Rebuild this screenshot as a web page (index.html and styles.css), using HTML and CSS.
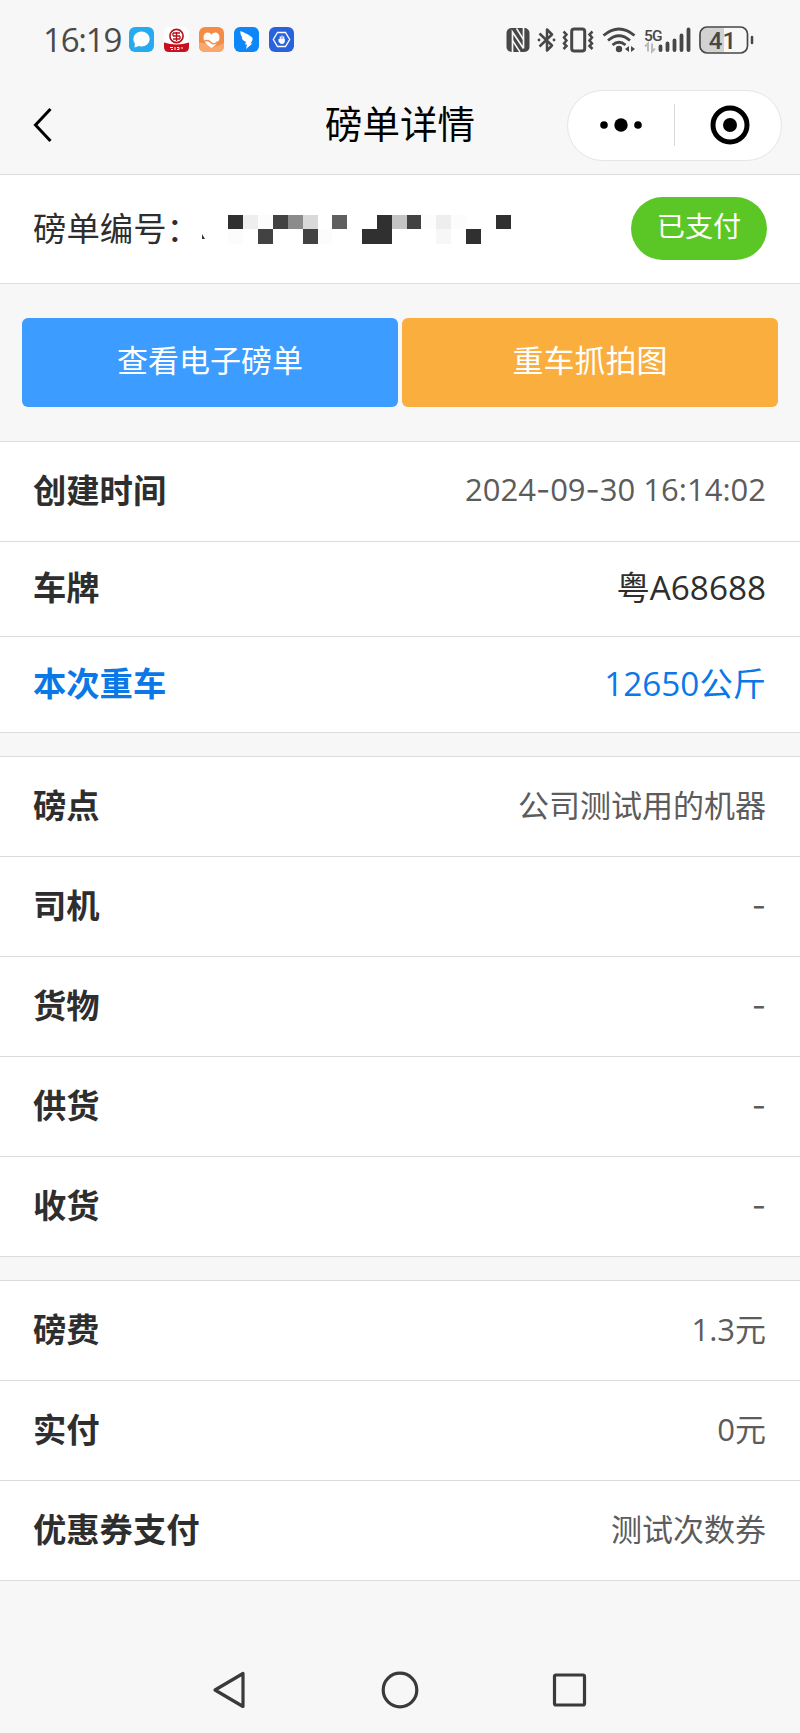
FILE: index.html
```
<!DOCTYPE html>
<html lang="zh-CN">
<head>
    <meta charset="UTF-8">
    <meta name="viewport" content="width=device-width, initial-scale=1.0">
    <title>磅单详情</title>
    <link rel="stylesheet" href="styles.css">
</head>
<body>
    <header class="header">
        <div class="statusbar">
            <span class="time">16:19</span>
            <div class="apps">
                <svg width="25" height="25" viewBox="0 0 25 25">
                    <rect width="25" height="25" rx="6" fill="#27aaf0"/>
                    <ellipse cx="12.5" cy="12" rx="8.2" ry="7.4" fill="#fff"/>
                    <path d="M6 15l-.5 5.5 6-2z" fill="#fff"/>
                </svg>
                <svg width="25" height="25" viewBox="0 0 25 25">
                    <rect width="25" height="25" rx="6" fill="#fff"/>
                    <path d="M0 15.5q12.5 4 25 0V20q0 5-5 5H5q-5 0-5-5z" fill="#c8101e"/>
                    <circle cx="12.5" cy="9" r="6.6" fill="#fff" stroke="#b5121b" stroke-width="1.6"/>
                    <path d="M9 6h7M9 9h7M9 12h7M12.5 5v9M9 6v3M16 9v3" fill="none" stroke="#b5121b" stroke-width="1.3"/>
                    <path d="M6 20.500h3M7 22.500h2M11 20v3M13 20.500h2v2h-2M18 20v2" stroke="#fff" stroke-width="1" fill="none"/>
                </svg>
                <svg width="25" height="25" viewBox="0 0 25 25">
                    <rect width="25" height="25" rx="6" fill="#f58b45"/>
                    <path d="M0 15q4 2 7 1t6 2 12-2v3q0 6-6 6H6q-6 0-6-6z" fill="#f9a76c"/>
                    <path d="M12.5 21C7 17 4.5 14 4.5 10.2 4.5 5 10.5 4 12.500 8c2-4 8-3 8 2.200C20.500 14 18 17 12.500 21z" fill="#fff"/>
                    <path d="M5 14.500c3-2 5-1 7 1s4 2 7-1" fill="none" stroke="#f58b45" stroke-width="1.5"/>
                </svg>
                <svg width="25" height="25" viewBox="0 0 25 25">
                    <rect width="25" height="25" rx="6" fill="#0d86f7"/>
                    <path d="M6.500 4C11 6 17 8.500 18.500 11c.8 1.700-1 4-2 5.500h2L12 22l1-4.500h-2l1-2.500C8.500 13.500 7.500 11.500 8 10 6.500 8 6.200 6 6.500 4z" fill="#fff"/>
                </svg>
                <svg width="25" height="25" viewBox="0 0 25 25">
                    <rect width="25" height="25" rx="6" fill="#2a62dc"/>
                    <path d="M8.500 5.500h8l4.200 7-4.200 7h-8l-4.200-7z" fill="none" stroke="#fff" stroke-width="1.3"/>
                    <path d="M11.300 13V9.500M13 13V8.500M14.700 13V9.500" fill="none" stroke="#fff" stroke-width="1.2"/>
                    <path d="M9.500 12h6.300v3q-.8 2-2.800 2t-3.500-2.500z" fill="#fff"/>
                </svg>
            </div>
            <div class="signals">
                <!-- nfc -->
                <svg class="nfc" width="24" height="30" viewBox="0 0 24 30">
                    <rect x=".5" y="3" width="23" height="24" rx="5" fill="#474747"/>
                    <path d="M6.500 27V7l11 16.500M17.500 3v20.500" fill="none" stroke="#f7f7f7" stroke-width="1.700"/>
                    <path d="M10.500 3.500l7 11M6.500 15.500l7.500 11.500" fill="none" stroke="#f7f7f7" stroke-width="1.500"/>
                </svg>
                <!-- bluetooth -->
                <svg class="bluetooth" width="19" height="30" viewBox="0 0 19 30">
                    <path d="M2.500 8.500L15 20.500 10 25.500V4.500l5 5L2.500 21.500" fill="none" stroke="#474747" stroke-width="2.500" stroke-linejoin="round"/>
                    <circle cx="2" cy="15" r="1.400" fill="#474747"/>
                    <circle cx="17" cy="15" r="1.400" fill="#474747"/>
                </svg>
                <!-- vibrate -->
                <svg class="vibrate" width="32" height="30" viewBox="0 0 32 30">
                    <rect x="9.700" y="4" width="13" height="22" rx="2.500" fill="none" stroke="#474747" stroke-width="3"/>
                    <path d="M1.500 6.500l3 3-2.500 3 2.500 3-2.500 3 2.500 2.500-3 3M30.500 6.500l-3 3 2.500 3-2.500 3 2.500 3-2.500 2.500 3 3" fill="none" stroke="#474747" stroke-width="2.500"/>
                </svg>
                <!-- wifi -->
                <svg class="wifi" width="34" height="30" viewBox="0 0 34 30">
                    <path d="M1.500 10.500q15.500-13 31 0M6 15.500q11-9.500 22 0M10.500 20q6.500-5.500 13 0" fill="none" stroke="#474747" stroke-width="2.800"/>
                    <circle cx="17" cy="24" r="3.200" fill="#474747"/>
                    <path d="M27 21v6l-4-3zM29 21v6l4-3z" fill="#474747"/>
                </svg>
                <!-- mobile network -->
                <svg class="mobile" width="48" height="30" viewBox="0 0 48 30">
                    <text x="0" y="15.500" class="net">5G</text>
                    <path d="M4 26.500v-8l-3 3M8 18.500v8l3-3" fill="none" stroke="#bbb" stroke-width="2"/>
                    <path d="M16.500 21.500V25M23.500 18.500V25M30.500 15.500V25M37.500 10.500V25M44.500 4.500V25" stroke="#474747" stroke-width="3.800" stroke-linecap="round"/>
                </svg>
                <!-- battery -->
                <svg class="battery" width="55" height="30" viewBox="0 0 55 30">
                    <path d="M25 2.500H9q-7 0-7 7v11q0 7 7 7h16z" fill="#d2d2d2"/>
                    <rect x="1" y="2" width="47.500" height="26" rx="7" fill="none" stroke="#474747" stroke-width="1.700"/>
                    <path d="M53 12v6" stroke="#474747" stroke-width="2.500" stroke-linecap="round"/>
                    <text x="23.500" y="23.500" class="level">41</text>
                </svg>
            </div>
        </div>
        <div class="navbar">
            <svg class="back" width="20" height="36" viewBox="0 0 20 36">
                <path d="M18.500 2L3.500 18l15 16" fill="none" stroke="#000" stroke-width="3"/>
            </svg>
            <h1 class="title">磅单详情</h1>
            <div class="capsule">
                <svg width="42" height="14" viewBox="0 0 42 14">
                    <circle cx="4" cy="7" r="3.800"/>
                    <circle cx="21" cy="7" r="6.700"/>
                    <circle cx="38" cy="7" r="3.800"/>
                </svg>
                <span class="split"></span>
                <svg width="40" height="40" viewBox="0 0 40 40">
                    <circle cx="20" cy="20" r="17" fill="none" stroke="#000" stroke-width="5"/>
                    <circle cx="20" cy="20" r="7"/>
                </svg>
            </div>
        </div>
    </header>

    <div class="number">
        <span class="label">磅单编号：</span>
        <!-- masked number -->
        <svg class="mask" width="312" height="32" viewBox="0 0 312 32" shape-rendering="crispEdges">
            <path d="M2 21v5h3z" fill="#333" shape-rendering="auto"/>
            <g transform="translate(28.400 1.600) scale(14.850)">
                <path d="M0 0h1v1H0zM10 0h1v2H9V1h1zM18 0h1v1h-1zM16 1h1v1h-1z" fill="#303030"/>
                <path d="M3 0h1v1H3zM12 0h1v1h-1zM2 1h1v1H2zM5 1h1v1H5z" fill="#424242"/>
                <path d="M7 0h1v1H7z" fill="#5f5f5f"/>
                <path d="M4 0h1v1H4z" fill="#8b8b8b"/>
                <path d="M11 0h1v1h-1z" fill="#c4c4c4"/>
                <path d="M5 0h1v1H5z" fill="#d9d9d9"/>
                <path d="M1 0h1v1H1zM14 0h1v1h-1z" fill="#eee"/>
                <path d="M14 1h1v1h-1z" fill="#f7f7f7"/>
                <path d="M2 0h1v1H2zM0 1h1v1H0zM6 1h1v1H6zM13 0h1v1h-1zM15 0h1v1h-1z" fill="#fcfcfc"/>
            </g>
        </svg>
        <span class="tag">已支付</span>
    </div>

    <div class="buttons">
        <button class="btn blue">查看电子磅单</button>
        <button class="btn orange">重车抓拍图</button>
    </div>

    <div class="group">
        <div class="row"><b>创建时间</b><span class="date">2024<i>-</i>09<i>-</i>30 16:14:02</span></div>
        <div class="row small dark"><b>车牌</b><span>粤A68688</span></div>
        <div class="row small weight"><b>本次重车</b><span>12650公斤</span></div>
    </div>

    <div class="group">
        <div class="row"><b>磅点</b><span>公司测试用的机器</span></div>
        <div class="row"><b>司机</b><span class="empty">-</span></div>
        <div class="row"><b>货物</b><span class="empty">-</span></div>
        <div class="row"><b>供货</b><span class="empty">-</span></div>
        <div class="row"><b>收货</b><span class="empty">-</span></div>
    </div>

    <div class="group">
        <div class="row"><b>磅费</b><span>1.3元</span></div>
        <div class="row"><b>实付</b><span>0元</span></div>
        <div class="row"><b>优惠券支付</b><span>测试次数券</span></div>
    </div>

    <footer class="keys">
        <svg width="38" height="38" viewBox="0 0 38 38">
            <path d="M32 2.500v33L4 19z" fill="none" stroke="#3a3a3a" stroke-width="3.200" stroke-linejoin="round"/>
        </svg>
        <svg width="38" height="38" viewBox="0 0 38 38">
            <circle cx="19" cy="19" r="16.800" fill="none" stroke="#3a3a3a" stroke-width="3.200"/>
        </svg>
        <svg width="38" height="38" viewBox="0 0 38 38">
            <rect x="3.500" y="4" width="30" height="30" rx="1.500" fill="none" stroke="#3a3a3a" stroke-width="3.200"/>
        </svg>
    </footer>
</body>
</html>
```
FILE: styles.css
```
* {
  box-sizing: border-box;
}

body {
  margin: 0;
  height: 1733px;
  background-color: #f7f7f7;
  color: #2e2e2e;
  font-family: "Open Sans", "Noto Sans CJK SC", sans-serif;
  display: flex;
  flex-direction: column;
}

svg {
  display: block;
  flex: none;
  overflow: visible;
}

/* Status bar and title */
.header {
  height: 175px;
  border-bottom: 1px solid #dcdcdc;
}

.statusbar {
  height: 79px;
  padding-left: 43px;
  display: flex;
  align-items: center;
}

.time {
  width: 86px;
  font-size: 33px;
  font-weight: 500;
  line-height: 40px;
  letter-spacing: -1.2px;
  color: #4a4a4a;
}

.apps {
  display: flex;
  gap: 10px;
}

.signals {
  display: flex;
  margin-left: 212px;
}

.bluetooth {
  margin-left: 7px;
}

.vibrate {
  margin-left: 6px;
}

.wifi {
  margin-left: 8px;
}

.mobile {
  margin-left: 8px;
}

.battery {
  margin-left: 7px;
}

.net {
  font-family: Roboto, sans-serif;
  font-size: 15.5px;
  font-weight: 500;
  letter-spacing: -0.8px;
  fill: #474747;
}

.level {
  font-family: Roboto, sans-serif;
  font-size: 24px;
  font-weight: 500;
  text-anchor: middle;
  fill: #474747;
}

.navbar {
  height: 92px;
  padding: 0 18px 0 32px;
  display: grid;
  grid-template-columns: 1fr auto 1fr;
  align-items: center;
}

.title {
  margin: -2px 0 0 -14px;
  font-size: 37.5px;
  font-weight: 400;
  line-height: 50px;
  color: #000;
}

.capsule {
  width: 215px;
  height: 71px;
  padding: 0 31px 0 32px;
  border: 1px solid #e5e5e5;
  border-radius: 36px;
  background-color: #fff;
  justify-self: end;
  display: flex;
  align-items: center;
  justify-content: space-between;
}

.split {
  width: 1px;
  height: 42px;
  margin-left: -3px;
  background-color: #d8d8d8;
}

/* Number of the bill */
.number {
  height: 109px;
  padding: 0 33px 1px;
  border-bottom: 1px solid #dfdfdf;
  background-color: #fff;
  display: flex;
  align-items: center;
  font-size: 33.4px;
}

.label {
  padding-bottom: 4px;
}

.tag {
  width: 136px;
  height: 63px;
  margin-left: auto;
  border-radius: 32px;
  background-color: #5bc726;
  color: #fff;
  font-size: 28.2px;
  line-height: 59px;
  text-align: center;
}

/* Two buttons side by side */
.buttons {
  height: 157px;
  padding: 34px 22px 0;
  display: flex;
  gap: 4px;
}

.btn {
  flex: 1;
  height: 89px;
  padding: 0 0 8px;
  border: none;
  border-radius: 6px;
  color: #fff;
  font-family: inherit;
  font-size: 31px;
}

.blue {
  background-color: #3c9cff;
}

.orange {
  background-color: #f9ae3d;
}

/* Detail rows */
.group {
  border-top: 1px solid #dcdcdc;
  margin-bottom: 23px;
  background-color: #fff;
}

.row {
  height: 100px;
  padding: 0 34px 7px 33px;
  border-bottom: 1px solid #dcdcdc;
  display: flex;
  align-items: center;
  justify-content: space-between;
  font-size: 33.3px;
}

.row span {
  font-size: 31px;
  color: #5c5c5c;
}

.small {
  height: 95px;
}

.small span {
  font-size: 33.3px;
}

.dark span {
  color: #2e2e2e;
}

.weight {
  height: 96px;
}

.weight b, .weight span {
  color: #0a78e6;
}

.row .date {
  padding-top: 2px;
}

/* Wider dash than the text font has */
.date i, .row .empty {
  font-family: Inter, sans-serif;
  font-style: normal;
}

.row .empty {
  padding-top: 4px;
}

/* Phone keys at the bottom */
.keys {
  margin-top: auto;
  padding: 0 211px 24px;
  display: flex;
  justify-content: space-between;
}
```
